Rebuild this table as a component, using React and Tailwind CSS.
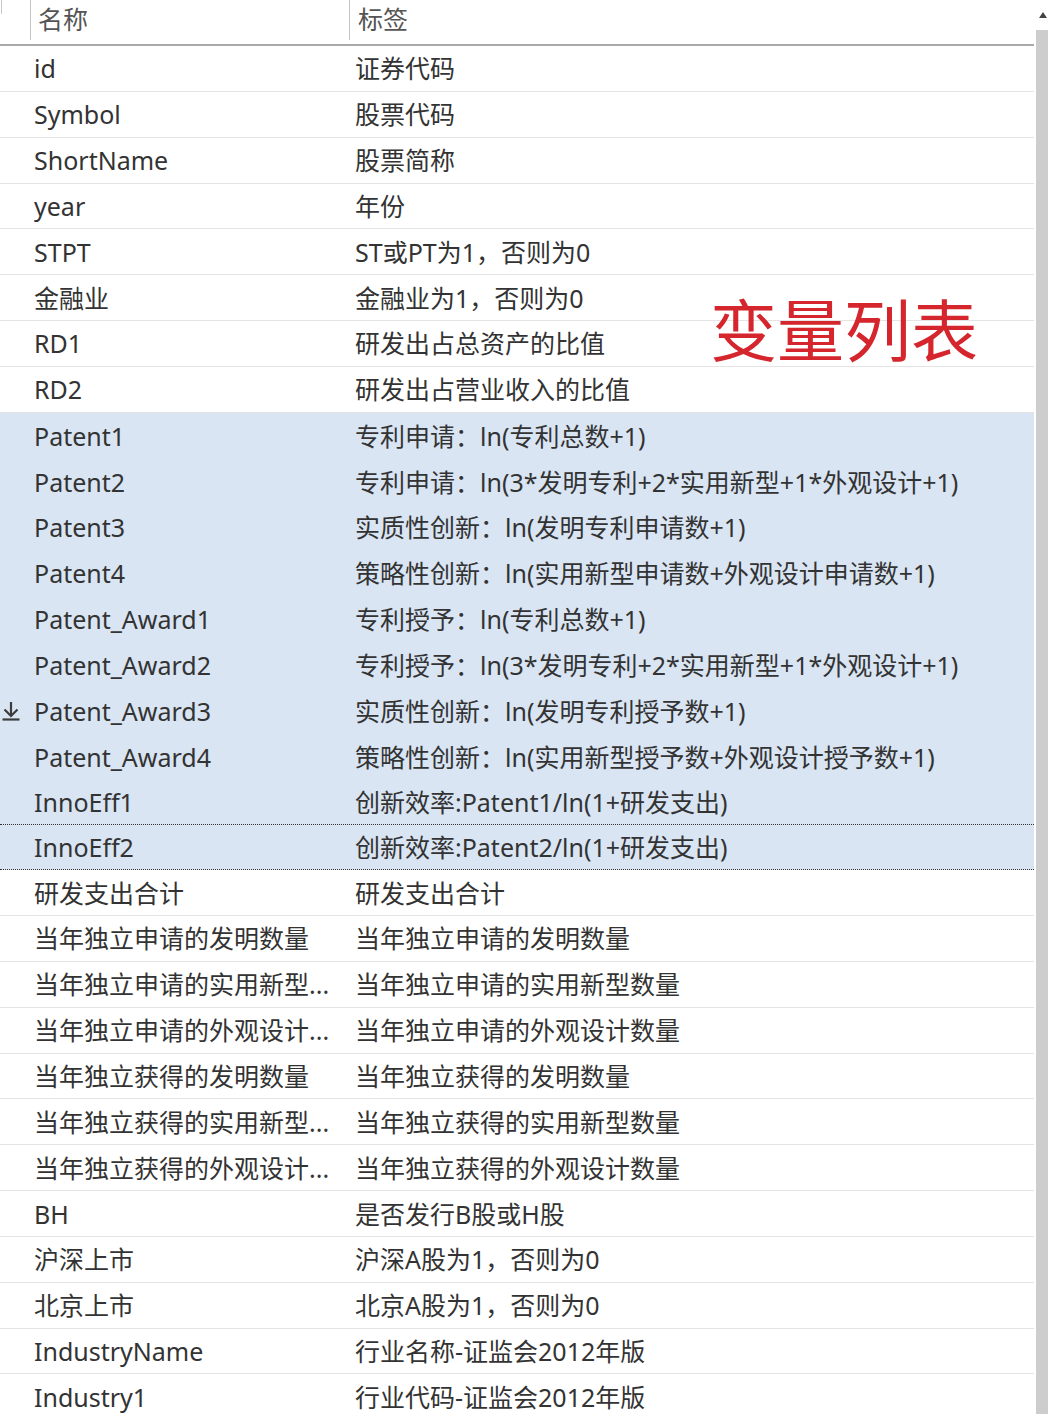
import React from "react";

const rows = [
  ["id", "证券代码"],
  ["Symbol", "股票代码"],
  ["ShortName", "股票简称"],
  ["year", "年份"],
  ["STPT", "ST或PT为1，否则为0"],
  ["金融业", "金融业为1，否则为0"],
  ["RD1", "研发出占总资产的比值"],
  ["RD2", "研发出占营业收入的比值"],
  ["Patent1", "专利申请：ln(专利总数+1)", true],
  ["Patent2", "专利申请：ln(3*发明专利+2*实用新型+1*外观设计+1)", true],
  ["Patent3", "实质性创新：ln(发明专利申请数+1)", true],
  ["Patent4", "策略性创新：ln(实用新型申请数+外观设计申请数+1)", true],
  ["Patent_Award1", "专利授予：ln(专利总数+1)", true],
  ["Patent_Award2", "专利授予：ln(3*发明专利+2*实用新型+1*外观设计+1)", true],
  ["Patent_Award3", "实质性创新：ln(发明专利授予数+1)", true, "icon"],
  ["Patent_Award4", "策略性创新：ln(实用新型授予数+外观设计授予数+1)", true],
  ["InnoEff1", "创新效率:Patent1/ln(1+研发支出)", true],
  ["InnoEff2", "创新效率:Patent2/ln(1+研发支出)", true, "focus"],
  ["研发支出合计", "研发支出合计"],
  ["当年独立申请的发明数量", "当年独立申请的发明数量"],
  ["当年独立申请的实用新型...", "当年独立申请的实用新型数量"],
  ["当年独立申请的外观设计...", "当年独立申请的外观设计数量"],
  ["当年独立获得的发明数量", "当年独立获得的发明数量"],
  ["当年独立获得的实用新型...", "当年独立获得的实用新型数量"],
  ["当年独立获得的外观设计...", "当年独立获得的外观设计数量"],
  ["BH", "是否发行B股或H股"],
  ["沪深上市", "沪深A股为1，否则为0"],
  ["北京上市", "北京A股为1，否则为0"],
  ["IndustryName", "行业名称-证监会2012年版"],
  ["Industry1", "行业代码-证监会2012年版"],
];

function DownIcon() {
  return (
    <svg width="20" height="22" viewBox="0 0 20 22" fill="none" stroke="#3c3c3c" strokeWidth="2.2">
      <line x1="10" y1="2" x2="10" y2="16" />
      <polyline points="3.5,9.5 10,16 16.5,9.5" />
      <line x1="1.5" y1="19.5" x2="18.5" y2="19.5" />
    </svg>
  );
}

export default function App() {
  return (
    <div
      className="relative w-[1048px] h-[1414px] overflow-hidden bg-white flex text-[#333]"
      style={{ fontFamily: '"Noto Sans", "Noto Sans CJK SC", sans-serif' }}
    >
      <div className="w-[1034px] flex flex-col">
        <div className="h-[46px] shrink-0 flex border-b-2 border-[#a9a9a9] text-[#555]">
          <div className="w-[30px] flex items-start">
            <div className="w-[1px] h-[14px] bg-[#c8c8c8] ml-[1px]" />
          </div>
          <div className="w-[319px] flex items-start border-l border-[#c4c4c4] h-[40px]">
            <span className="text-[25px] leading-[38px] pl-[7px]">名称</span>
          </div>
          <div className="flex-1 flex items-start border-l border-[#c4c4c4] h-[40px]">
            <span className="text-[25px] leading-[38px] pl-[8px]">标签</span>
          </div>
        </div>
        {rows.map(([name, label, sel, flag], i) => (
          <div
            key={i}
            className={
              "h-[45.85px] shrink-0 flex items-center text-[25px] leading-[38px] " +
              (sel ? "bg-[#d9e5f3] " : "border-b border-[#e4e4e4] ") +
              (flag === "focus" ? "border-y border-dotted border-[#333] -mt-[1px]" : "")
            }
          >
            <div className="w-[34px] shrink-0 flex items-center pl-[1px]">
              {flag === "icon" ? <DownIcon /> : null}
            </div>
            <div className="w-[321px] shrink-0 whitespace-nowrap overflow-hidden">{name}</div>
            <div className="flex-1 whitespace-nowrap overflow-hidden">{label}</div>
          </div>
        ))}
      </div>
      <div className="w-[14px] flex flex-col">
        <div className="h-[30px] bg-white flex items-center justify-end pr-[1px]">
          <div className="w-0 h-0 border-l-[4px] border-r-[4px] border-b-[6px] border-l-transparent border-r-transparent border-b-[#444]" />
        </div>
        <div className="flex-1 bg-[#cdcdcd] ml-[2px]" />
      </div>
      <div
        className="absolute left-[710px] top-[284px] text-[67px] leading-[86px] text-[#d4262c]"
        style={{ fontFamily: '"Noto Sans CJK SC", sans-serif' }}
      >
        变量列表
      </div>
    </div>
  );
}
